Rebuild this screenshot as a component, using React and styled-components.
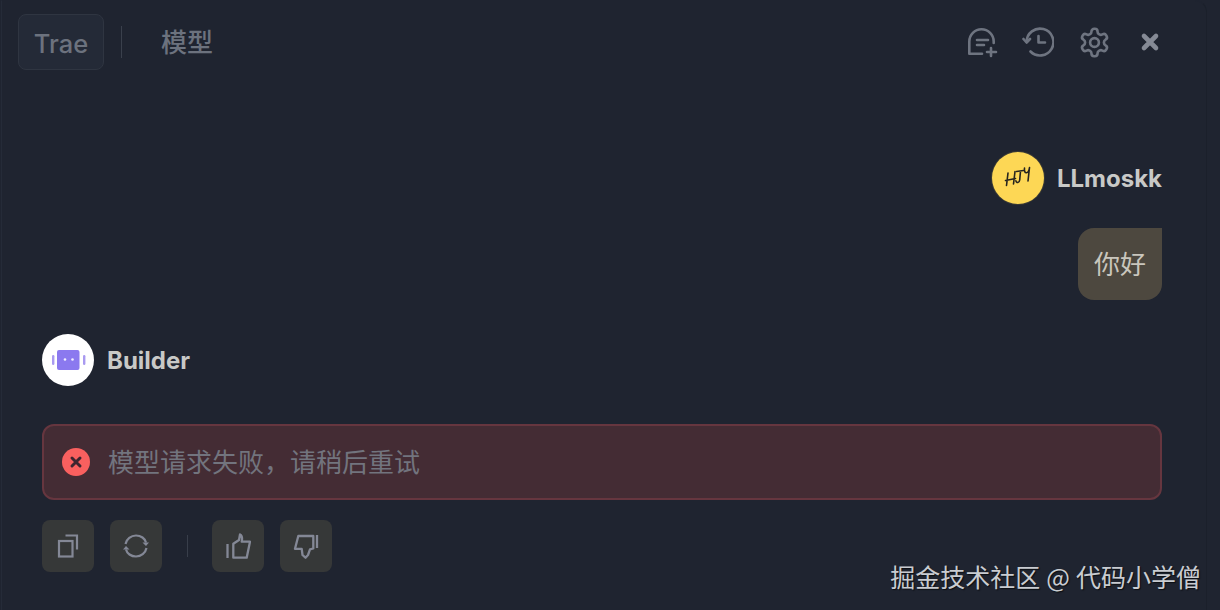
import React from "react";
import styled, { createGlobalStyle } from "styled-components";

const GlobalStyle = createGlobalStyle`
  html, body {
    margin: 0;
    padding: 0;
    background: #1f2430;
  }
  * {
    box-sizing: border-box;
  }
`;

const Panel = styled.div`
  position: relative;
  width: 1220px;
  height: 610px;
  overflow: hidden;
  background: #1f2430;
  font-family: Inter, "Noto Sans CJK SC", sans-serif;
`;
const Inner = styled.div`
  width: 1206px;
  height: 610px;
  margin-left: 1px;
  border-left: 1px solid #252b38;
  border-right: 1px solid #1b202b;
  border-top: 1px solid #1f2430;
  border-top-right-radius: 12px;
  display: flex;
  flex-direction: column;
`;
const Header = styled.div`
  height: 69px;
  padding: 13px 40px 0 16px;
  display: flex;
  align-items: flex-start;
`;
const AgentTab = styled.div`
  width: 86px;
  height: 56px;
  padding-top: 2px;
  border: 1px solid #2f3541;
  border-radius: 8px;
  background: #242a37;
  color: #6c727e;
  font-size: 25.5px;
  font-weight: 500;
  display: flex;
  align-items: center;
  justify-content: center;
`;
const HeaderDivider = styled.div`
  width: 1px;
  height: 32px;
  margin: 12px 0 0 17px;
  background: #3a404c;
`;
const ModelTab = styled.div`
  margin: 12px 0 0 39px;
  color: #6c727e;
  font-size: 26px;
  line-height: 34px;
  font-weight: 500;
`;
const HeaderIcons = styled.div`
  margin-left: auto;
  display: flex;
  gap: 24px;
  padding-top: 12px;
`;
const IconSlot = styled.div`
  width: 32px;
  height: 32px;
  color: ${(p) => p.$color || "#6e7480"};
  svg {
    display: block;
  }
`;
const GearSvg = styled.svg`
  margin-left: -0.5px;
`;
const Messages = styled.div`
  flex: 1;
  padding: 81px 44px 0 40px;
  display: flex;
  flex-direction: column;
`;
const UserRow = styled.div`
  display: flex;
  justify-content: flex-end;
  align-items: center;
  gap: 13px;
  height: 54px;
`;
const Avatar = styled.div`
  width: 52px;
  height: 52px;
  border-radius: 50%;
  display: flex;
  align-items: center;
  justify-content: center;
  background: ${(p) => p.$bg};
  box-shadow: ${(p) => (p.$ring ? "0 0 0 1px #3a3a35" : "none")};
  flex-shrink: 0;
`;
const Name = styled.div`
  color: #c8c9c7;
  font-size: 24px;
  font-weight: 700;
`;
const Bubble = styled.div`
  align-self: flex-end;
  margin-top: 23px;
  width: 84px;
  height: 72px;
  padding-bottom: 3px;
  background: #4d483f;
  border-radius: 16px 0 16px 16px;
  color: #c9c6bd;
  font-size: 26px;
  display: flex;
  align-items: center;
  justify-content: center;
`;
const BotRow = styled.div`
  display: flex;
  align-items: center;
  gap: 13px;
  margin-top: 34px;
  height: 52px;
`;
const ErrorBox = styled.div`
  margin-top: 38px;
  height: 76px;
  border: 2px solid #66363f;
  border-radius: 12px;
  background: #442c34;
  display: flex;
  align-items: center;
  padding-left: 18px;
  gap: 18px;
  color: #72747e;
  font-size: 26px;
`;
const ErrorText = styled.span`
  padding-bottom: 3px;
`;
const ErrorIcon = styled.span`
  width: 28px;
  height: 28px;
  border-radius: 50%;
  background: #f9605f;
  display: flex;
  align-items: center;
  justify-content: center;
`;
const Actions = styled.div`
  margin-top: 20px;
  display: flex;
  align-items: center;
`;
const ActionButton = styled.div`
  width: 52px;
  height: 52px;
  border-radius: 8px;
  background: #363838;
  color: #848896;
  display: flex;
  align-items: center;
  justify-content: center;
  margin-right: 16px;
`;
const ActionDivider = styled.div`
  width: 1px;
  height: 22px;
  background: #383e4a;
  margin: 0 24px 0 9px;
`;
const Watermark = styled.div`
  position: absolute;
  right: 19px;
  bottom: 17px;
  color: #c9ccd1;
  font-size: 25px;
  line-height: 34px;
  word-spacing: 0.5px;
  font-family: "Noto Sans CJK SC", sans-serif;
  text-shadow: 1px 1px 1px #0c0e12;
`;

function NewChatIcon() {
  return (
    <svg width="32" height="32" viewBox="0 0 32 32" fill="none" stroke="currentColor" strokeWidth="2.6" strokeLinecap="round" strokeLinejoin="round">
      <path d="M16 27.7H3.300V15.500C3.300 8.700 8.800 3.300 15.500 3.300S27.700 8.700 27.700 15.500V17" />
      <path d="M11 14h11M11 19h7" />
      <path d="M25 22v8M21 26h9" />
    </svg>
  );
}
function HistoryIcon() {
  return (
    <svg width="32" height="32" viewBox="0 0 32 32" fill="none" stroke="currentColor" strokeWidth="2.6" strokeLinecap="round" strokeLinejoin="round">
      <path d="M4.600 16A13.400 13.400 0 1 1 8.500 25.500" />
      <path d="M1.500 13l3.100 3.500L8 13" />
      <path d="M16.500 10v6.500H23" />
    </svg>
  );
}
function GearIcon() {
  return (
    <GearSvg width="33" height="33" viewBox="0 0 24 24" fill="none" stroke="currentColor" strokeWidth="1.900" strokeLinecap="round" strokeLinejoin="round">
      <path d="M12.220 2h-.44a2 2 0 0 0-2 2v.18a2 2 0 0 1-1 1.730l-.43.250a2 2 0 0 1-2 0l-.15-.08a2 2 0 0 0-2.730.730l-.220.380a2 2 0 0 0 .730 2.730l.150.100a2 2 0 0 1 1 1.720v.510a2 2 0 0 1-1 1.740l-.150.090a2 2 0 0 0-.730 2.730l.220.380a2 2 0 0 0 2.730.730l.150-.08a2 2 0 0 1 2 0l.430.250a2 2 0 0 1 1 1.730V20a2 2 0 0 0 2 2h.44a2 2 0 0 0 2-2v-.18a2 2 0 0 1 1-1.730l.430-.250a2 2 0 0 1 2 0l.150.080a2 2 0 0 0 2.730-.730l.220-.390a2 2 0 0 0-.730-2.730l-.150-.080a2 2 0 0 1-1-1.740v-.500a2 2 0 0 1 1-1.740l.150-.090a2 2 0 0 0 .730-2.730l-.220-.380a2 2 0 0 0-2.730-.730l-.150.080a2 2 0 0 1-2 0l-.430-.250a2 2 0 0 1-1-1.730V4a2 2 0 0 0-2-2z" />
      <circle cx="12" cy="12" r="3.200" />
    </GearSvg>
  );
}
function CloseIcon() {
  return (
    <svg width="32" height="32" viewBox="0 0 32 32" fill="none" stroke="currentColor" strokeWidth="4.600" strokeLinecap="round">
      <path d="M10 10l12 12M22 10L10 22" />
    </svg>
  );
}
function HjyAvatar() {
  return (
    <svg width="52" height="52" viewBox="0 0 52 52" fill="none" stroke="#26241f" strokeWidth="1.600" strokeLinecap="round" strokeLinejoin="round">
      <path d="M16 21l-1.500 12.500M23 19.500L21.500 32M13.500 28.500l10-2" />
      <path d="M24.500 19.500l7-1M28.500 19l-.800 9c-.300 3-3.300 3.500-3.800.800" />
      <path d="M32.500 16c-.300 3 .300 5 2 4.800s2.500-2 3-5.300M37.500 15.500L36 29" />
    </svg>
  );
}
function BotIcon() {
  return (
    <svg width="36" height="22" viewBox="0 0 36 22">
      <rect x="7" y="1" width="22.500" height="20" rx="2" fill="#8b79ef" />
      <rect x="2" y="6" width="2.400" height="10" rx="1.200" fill="#a99af0" />
      <rect x="33" y="6" width="2.400" height="10" rx="1.200" fill="#a99af0" />
      <circle cx="15" cy="10.500" r="1.300" fill="#f0edff" />
      <circle cx="22.500" cy="10.500" r="1.300" fill="#f0edff" />
    </svg>
  );
}
function CopyIcon() {
  return (
    <svg width="24" height="26" viewBox="0 0 24 26" fill="none" stroke="currentColor" strokeWidth="2.200">
      <rect x="3" y="8" width="13.500" height="15.500" />
      <path d="M9.500 2.500H21v14" />
    </svg>
  );
}
function RefreshIcon() {
  return (
    <svg width="28" height="28" viewBox="0 0 28 28" fill="none" stroke="currentColor" strokeWidth="2.200">
      <path d="M3.500 12C4.500 7 9 3.500 14 3.500S23 6.500 24 10.500" />
      <path d="M24.500 16C23.500 21 19 24.500 14 24.500S5 21.500 4 17.500" />
      <path d="M20.500 10.500h6.500l-3 3.500zM1 17.500h6.500L4 14z" fill="currentColor" stroke="none" />
    </svg>
  );
}
function ThumbUpIcon() {
  return (
    <svg width="26" height="26" viewBox="0 0 26 26" fill="none" stroke="currentColor" strokeWidth="2.300" strokeLinejoin="round">
      <path d="M2.500 11v14" />
      <path d="M8.300 24.700V10.800L14 7l1-5.500C17 2.500 17.500 5 16.700 8.700H25l-3.300 16z" />
    </svg>
  );
}
function ThumbDownIcon() {
  return (
    <svg width="26" height="26" viewBox="0 0 26 26" fill="none" stroke="currentColor" strokeWidth="2.300" strokeLinejoin="round">
      <path d="M24 2v13" />
      <path d="M20.300 3H5.300L2 15.800h6.700l.8 6.200 3 2.700 2.500-2.700 2-5.700 3.300-.8z" />
    </svg>
  );
}

export default function App() {
  return (
    <Panel>
      <GlobalStyle />
      <Inner>
        <Header>
          <AgentTab>Trae</AgentTab>
          <HeaderDivider />
          <ModelTab>模型</ModelTab>
          <HeaderIcons>
            <IconSlot><NewChatIcon /></IconSlot>
            <IconSlot><HistoryIcon /></IconSlot>
            <IconSlot><GearIcon /></IconSlot>
            <IconSlot $color="#858a95"><CloseIcon /></IconSlot>
          </HeaderIcons>
        </Header>
        <Messages>
          <UserRow>
            <Avatar $bg="#fdd755" $ring><HjyAvatar /></Avatar>
            <Name>LLmoskk</Name>
          </UserRow>
          <Bubble>你好</Bubble>
          <BotRow>
            <Avatar $bg="#ffffff"><BotIcon /></Avatar>
            <Name>Builder</Name>
          </BotRow>
          <ErrorBox>
            <ErrorIcon>
              <svg width="16" height="16" viewBox="0 0 16 16" fill="none" stroke="#3d2530" strokeWidth="3" strokeLinecap="round">
                <path d="M4 4l8 8M12 4l-8 8" />
              </svg>
            </ErrorIcon>
            <ErrorText>模型请求失败，请稍后重试</ErrorText>
          </ErrorBox>
          <Actions>
            <ActionButton><CopyIcon /></ActionButton>
            <ActionButton><RefreshIcon /></ActionButton>
            <ActionDivider />
            <ActionButton><ThumbUpIcon /></ActionButton>
            <ActionButton><ThumbDownIcon /></ActionButton>
          </Actions>
        </Messages>
      </Inner>
      <Watermark>掘金技术社区 @ 代码小学僧</Watermark>
    </Panel>
  );
}
